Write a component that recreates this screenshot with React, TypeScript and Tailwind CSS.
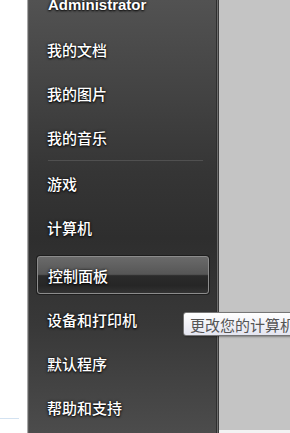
import React from 'react';

const cjk = "font-['Noto_Sans_CJK_SC','Noto_Sans',sans-serif]";
const glow = '[text-shadow:0_0_3px_rgba(0,0,0,0.9),0_1px_2px_rgba(0,0,0,0.8)]';

const Item: React.FC<{ label: string }> = ({ label }) => (
  <div className={`h-[44px] flex items-center pl-[18px] text-[15px] leading-none font-medium text-white ${cjk} ${glow}`}>
    {label}
  </div>
);

const App: React.FC = () => {
  return (
    <div className="relative w-[290px] h-[433px] overflow-hidden bg-white flex">
      {/* left desktop edge */}
      <div className="w-[27px] flex flex-col">
        <div className="h-[418px]" />
        <div className="h-px w-[19px] bg-[#d3e2f1]" />
      </div>

      {/* start menu right column */}
      <div className="flex h-full">
        <div className="w-px bg-[#a8a8a8]" />
        <div className="w-px bg-[#5c5c5c]" />
        <div className="w-[187px] flex flex-col bg-[linear-gradient(to_bottom,#525252_0%,#444444_20%,#353535_40%,#2e2e2e_55%,#383838_75%,#4c4c4c_100%)]">
          <div className="h-[27px] pl-[19px]">
            <div className={`-mt-[3px] text-[15px] leading-[15px] font-bold text-white font-['Liberation_Sans',Arial,sans-serif] ${glow}`}>
              Administrator
            </div>
          </div>
          <Item label="我的文档" />
          <Item label="我的图片" />
          <Item label="我的音乐" />
          <div className="h-[2px] flex flex-col justify-end">
            <div className="ml-[19px] w-[155px] h-px bg-[#505050]" />
          </div>
          <Item label="游戏" />
          <Item label="计算机" />

          <div className="mt-[7px] ml-[8px] w-[172px] h-[38px] rounded-[3px] border border-[#8c8c8c] shadow-[0_0_0_1px_#1e1e1e] bg-[linear-gradient(to_bottom,#6a6a6a_0%,#565656_48%,#2b2b2b_52%,#262626_80%,#333333_100%)] flex items-center pl-[10px]">
            <span className={`text-[15px] leading-none font-medium text-white ${cjk} ${glow}`}>控制面板</span>
          </div>

          <div className="h-[3px]" />
          <Item label="设备和打印机" />
          <Item label="默认程序" />
          <Item label="帮助和支持" />
        </div>
        <div className="w-px bg-[#2e2e2e]" />
        <div className="w-px bg-[#6c6c6c]" />
        <div className="w-px bg-[#3a3a3a]" />
      </div>

      {/* desktop behind */}
      <div className="flex-1 flex flex-col">
        <div className="h-[430px] bg-[#c4c4c4]" />
        <div className="flex-1 bg-[#f3f3f3]" />
      </div>

      {/* tooltip */}
      <div className="absolute left-[183px] top-[312px] w-[140px] h-[24px] rounded-[3px] border border-[#767676] bg-[linear-gradient(to_bottom,#ffffff,#e4e5f0)] shadow-[1px_1px_2px_rgba(0,0,0,0.35)] flex items-center pl-[6px]">
        <span className={`text-[15px] leading-none text-[#555555] whitespace-nowrap ${cjk}`}>更改您的计算机</span>
      </div>
    </div>
  );
};

export default App;
